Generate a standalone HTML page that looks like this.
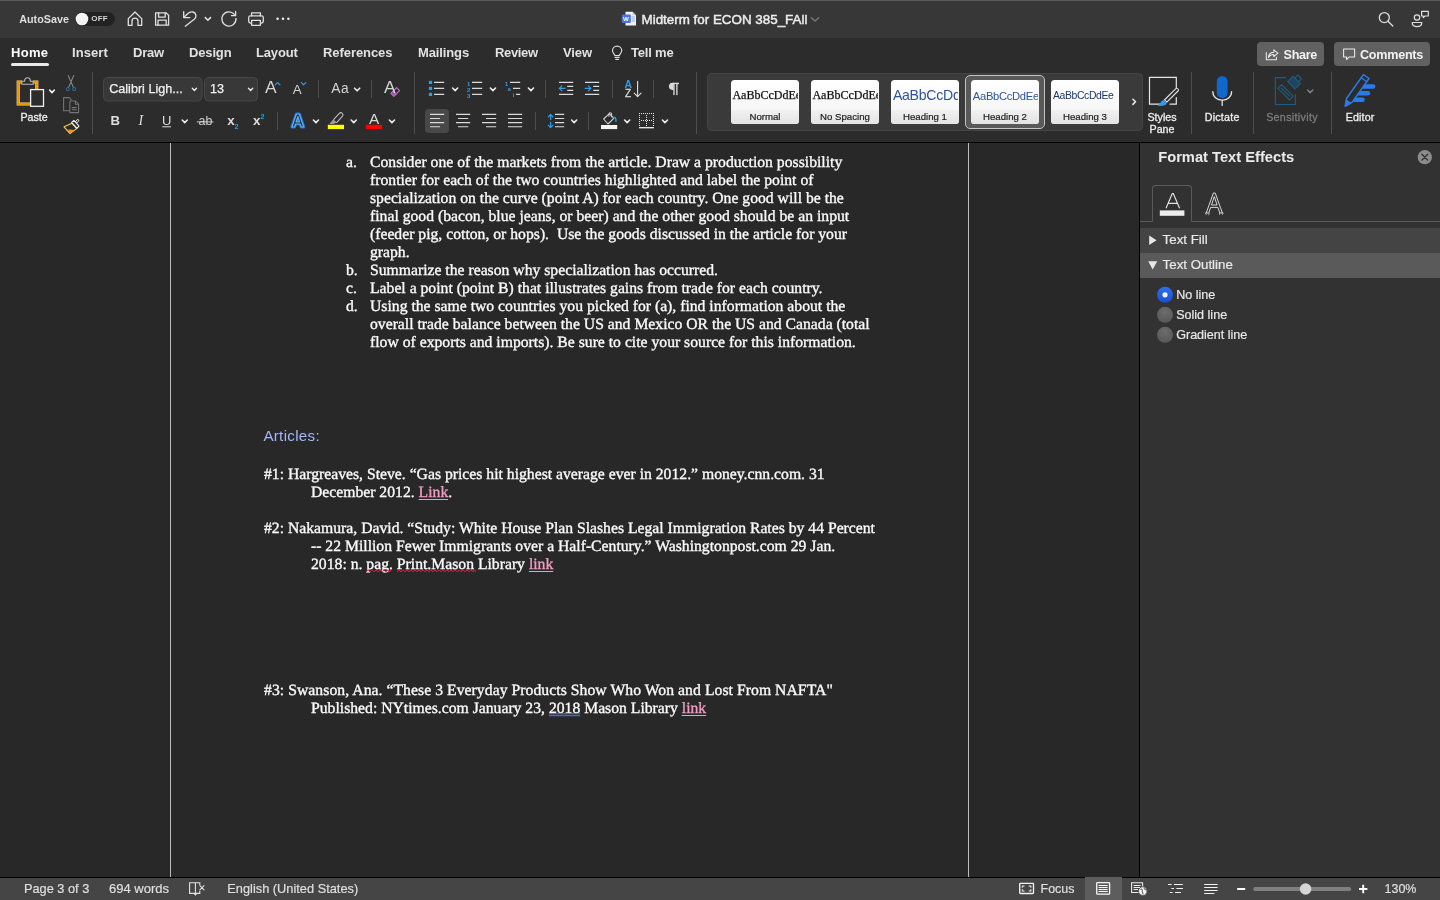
<!DOCTYPE html>
<html lang="en">
<head>
<meta charset="utf-8">
<title>Midterm for ECON 385_FAll</title>
<style>
*{box-sizing:border-box;margin:0;padding:0}
html,body{width:1440px;height:900px;overflow:hidden;background:#282828}
body{position:relative;font-family:"Liberation Sans",sans-serif;color:#e6e6e6;font-size:13px}
.abs{position:absolute}
.t{position:absolute;white-space:nowrap;line-height:1}
#titlebar{left:0;top:0;width:1440px;height:38px;background:#373737;border-top:1px solid #5c5c5c}
#ribbon{left:0;top:38px;width:1440px;height:104px;background:#2c2c2c}
#rline{left:0;top:142px;width:1440px;height:1px;background:#000}
#doc{left:0;top:143px;width:1139px;height:734px;background:#282828}
.pb{position:absolute;top:143px;width:1px;height:734px;background:#bdbdbd}
#pane{left:1139px;top:143px;width:301px;height:734px;background:#323232;border-left:1px solid #000}
#status{left:0;top:877px;width:1440px;height:23px;background:#454545;border-top:1px solid #000}
.tab{position:absolute;top:45px;font-weight:bold;font-size:13px;line-height:15px;color:#e2e2e2;white-space:nowrap}
.dl{position:absolute;text-rendering:geometricPrecision;white-space:nowrap;font-family:"Liberation Serif",serif;font-size:15.705px;line-height:18px;color:#fbfbfb;height:18px;-webkit-text-stroke:0.35px #fbfbfb}
.lk{color:#ee9cc2;-webkit-text-stroke:.35px #ee9cc2}
.st{position:absolute;top:881px;font-size:13px;line-height:15px;color:#e0e0e0;white-space:nowrap;-webkit-text-stroke:.15px #e0e0e0}
.pl{font-size:13px;color:#e8e8e8;-webkit-text-stroke:.2px #e8e8e8}
.num{position:absolute;white-space:nowrap;line-height:1;font-weight:bold;color:#2d9de6;font-size:6px}
.tile{position:absolute;top:80px;width:67px;height:30px;overflow:hidden;white-space:nowrap}
.tlab{position:absolute;top:110.9px;width:68px;text-align:center;font-size:9.65px;line-height:11px;color:#1c1c1c;white-space:nowrap;-webkit-text-stroke:.2px #1c1c1c}
.rlab{position:absolute;white-space:nowrap;font-size:10.7px;line-height:12px;color:#efefef;-webkit-text-stroke:.3px #efefef;text-align:center}
</style>
</head>
<body>
<div id="titlebar" class="abs"></div>
<div id="ribbon" class="abs"></div>
<div id="rline" class="abs"></div>
<div id="doc" class="abs"></div>
<div class="pb" style="left:170px"></div>
<div class="pb" style="left:968px"></div>
<div id="pane" class="abs"></div>
<div id="status" class="abs"></div>
<div id="ui" style="position:absolute;left:0;top:0;width:1440px;height:900px;will-change:transform">

<!-- TITLEBAR -->
<div class="t" id="autosave" style="left:19.2px;top:13.6px;font-size:10.8px;font-weight:bold;color:#dedede">AutoSave</div>
<div class="t" id="doctitle" style="left:641.5px;top:13px;font-size:13.4px;color:#ededed;-webkit-text-stroke:.45px #ededed">Midterm for ECON 385_FAll</div>

<!-- TABS -->
<div class="tab" style="left:11px;color:#fff;letter-spacing:0.3px">Home</div>
<div class="abs" style="left:11px;top:63px;width:38px;height:3px;border-radius:2px;background:#e9e9e9"></div>
<div class="tab" style="left:72px;letter-spacing:0.07px">Insert</div>
<div class="tab" style="left:133px;letter-spacing:-0.2px">Draw</div>
<div class="tab" style="left:189px;letter-spacing:-0.15px">Design</div>
<div class="tab" style="left:256px;letter-spacing:-0.15px">Layout</div>
<div class="tab" style="left:323px;letter-spacing:-0.07px">References</div>
<div class="tab" style="left:418px;letter-spacing:-0.12px">Mailings</div>
<div class="tab" style="left:495px;letter-spacing:-0.36px">Review</div>
<div class="tab" style="left:563px;letter-spacing:-0.1px">View</div>
<div class="tab" style="left:631px;letter-spacing:-0.2px">Tell me</div>

<!-- RIBBON -->
<svg class="abs" style="left:0;top:0" width="1440" height="143" viewBox="0 0 1440 143" fill="none" stroke-linecap="round" stroke-linejoin="round">
<defs>
<path id="chv" d="M0 0 L2.55 2.6 L5.1 0" stroke="#ececec" stroke-width="1.6" fill="none"/>
<path id="chs" d="M0 0 L2.6 2.6 L5.2 0" stroke="#e4e4e4" stroke-width="1.5" fill="none"/>
<path id="chx" d="M0 0 L2.1 2.2 L4.2 0" stroke="#e8e8e8" stroke-width="1.4" fill="none"/>
<linearGradient id="tg" x1="0" y1="0" x2="0" y2="1"><stop offset="0" stop-color="#ffffff"/><stop offset="1" stop-color="#f3f3f3"/></linearGradient>
<linearGradient id="lg" x1="0" y1="0" x2="0" y2="1"><stop offset="0" stop-color="#f1f1f1"/><stop offset="1" stop-color="#e2e2e2"/></linearGradient>
</defs>
<!-- autosave toggle -->
<rect x="75.5" y="12" width="39.5" height="14" rx="7" fill="#222222"/>
<circle cx="82" cy="19" r="6.3" fill="#f4f4f4"/>
<!-- titlebar icons -->
<g stroke="#e0e0e0" stroke-width="1.3">
<path d="M128.3 18.6 L135 12 L141.7 18.6 V25.4 H138 V21.2 A3 3 0 0 0 132 21.2 V25.4 H128.3 Z"/>
<path d="M155.6 12.9 H166.2 L168.6 15.3 V25.2 H155.6 Z"/>
<path d="M158.6 13 V17.2 H165.2 V13"/>
<path d="M158 25.1 V20.2 H166.2 V25.1"/>
<path d="M185.3 26.2 L194.2 19.3 C197 17 196.4 12.9 193 12 C190.8 11.4 189 12.4 187.4 14 L184 17.3"/>
<path d="M183.7 11.6 V17.6 H189.8"/>
<path d="M234.3 14.3 A7.1 7.1 0 1 0 236 18.5"/>
<path d="M235.6 11.4 V15.6 H231.4"/>
<path d="M251.6 15.8 V12.9 H260.4 V15.8"/>
<rect x="248.7" y="15.9" width="14.6" height="7.2" rx="1.8"/>
<rect x="251.6" y="20.4" width="8.8" height="4.9" fill="#373737"/>
</g>
<use href="#chs" x="205.3" y="17.6"/>
<g fill="#ececec"><circle cx="277.6" cy="18.8" r="1.3"/><circle cx="283" cy="18.8" r="1.3"/><circle cx="288.4" cy="18.8" r="1.3"/></g>
<!-- doc icon -->
<path d="M625.5 11.8 H632.5 L636 15.3 V25.6 H625.5 Z" fill="#f2f2f2" stroke="none"/>
<path d="M632.5 11.8 L636 15.3 H632.5 Z" fill="#c9c9c9" stroke="none"/>
<rect x="621.8" y="14.6" width="9" height="8.4" rx="1" fill="#4a74d8" stroke="none"/>
<g stroke="#7f9fe6" stroke-width="0.9"><path d="M632 17 H634.5 M632 19 H634.5 M632 21 H634.5"/></g>
<path d="M811.3 17.8 L815 21 L818.7 17.8" stroke="#7c7c7c" stroke-width="1.3"/>
<!-- search -->
<g stroke="#dedede" stroke-width="1.3"><circle cx="1384.3" cy="17.6" r="5"/><path d="M1388 21.3 L1392.8 26"/></g>
<!-- people/feedback -->
<g stroke="#dedede" stroke-width="1.2"><circle cx="1417" cy="17.5" r="2.7"/><path d="M1412.2 22.5 H1421.8 C1421.8 25 1419.8 26.6 1417 26.6 C1414.2 26.6 1412.2 25 1412.2 22.5 Z"/><path d="M1421.6 11.3 H1428.3 V16 H1425 L1423.3 17.7 V16 H1421.6 Z"/></g>
<!-- bulb -->
<g stroke="#dcdcdc" stroke-width="1.15"><path d="M614.8 55.6 C614.8 53.9 612.5 53.1 612.5 50.7 A4.6 4.6 0 0 1 621.7 50.7 C621.7 53.1 619.4 53.9 619.4 55.6 Z"/><path d="M615 57.5 H619.2 M615.7 59.3 H618.5"/></g>
<!-- share / comments buttons -->
<rect x="1257" y="42" width="67" height="24" rx="4" fill="#616161"/>
<rect x="1334" y="42" width="96" height="24" rx="4" fill="#616161"/>
<g stroke="#ececec" stroke-width="1.05"><path d="M1266.3 52.4 V59.8 H1276.4 V57.2"/><path d="M1268.4 57.6 C1268.7 54.4 1270.8 52.4 1273.8 52.3 V49.8 L1277.9 53.2 L1273.8 56.6 V54.4 C1271.4 54.4 1269.6 55.4 1268.4 57.6 Z"/>
<path d="M1343.6 49 H1354.6 V57 H1349 L1346.6 59.6 V57 H1343.6 Z"/></g>
<!-- group separators -->
<g stroke="#4e4e4e" stroke-width="1" stroke-linecap="butt"><path d="M92.5 72 V134 M414.5 72 V134 M696.5 72 V134 M1191.5 72 V134 M1253.5 72 V134 M1331.5 72 V134"/>
<path d="M318.5 80 V98 M371.5 80 V98 M277.5 112 V130 M545.5 80 V98 M612.5 80 V98 M653.5 80 V98 M535.5 112 V130 M588.5 112 V130"/></g>
<!-- paste -->
<path d="M22 82 H18.2 V104 H30" stroke="#ffdc80" stroke-width="3.1" stroke-linecap="butt" stroke-linejoin="miter"/><path d="M33 82 H36.8 V89" stroke="#ffdc80" stroke-width="3.1" stroke-linecap="butt" stroke-linejoin="miter"/>
<path d="M22 82 H18.2 V104 H30" stroke="#f29400" stroke-width="2.2" stroke-linecap="butt" stroke-linejoin="miter"/>
<path d="M33 82 H36.8 V89" stroke="#f29400" stroke-width="2.2" stroke-linecap="butt" stroke-linejoin="miter"/>
<path d="M21.8 84.3 V81.3 H24.6 C24.6 76.6 30.4 76.6 30.4 81.3 H33.2 V84.3 Z" stroke="#b9b9b9" stroke-width="1.1" fill="#2c2c2c"/>
<rect x="30.6" y="89.6" width="12.9" height="16.7" stroke="#f0f0f0" stroke-width="1.3" fill="#2c2c2c" stroke-linejoin="miter"/>
<path d="M49.7 90.1 L52 92.6 L54.3 90.1" stroke="#ececec" stroke-width="1.6"/>
<!-- scissors -->
<g stroke="#8a8a8a" stroke-width="1.1"><path d="M68.3 75.6 L73.5 87.6 M73.7 75.6 L68.5 87.6"/></g>
<g stroke="#296d98" stroke-width="1.05"><circle cx="67.8" cy="89.1" r="1.55"/><circle cx="74.2" cy="89.1" r="1.55"/></g>
<!-- copy -->
<g stroke="#757575" stroke-width="1.05"><path d="M69.6 110.7 H63.6 V97.6 H69.2 L71.3 99.7"/><path d="M69.9 101 H75.6 L78.6 104 V112.6 H69.9 Z"/><path d="M75.4 101.2 V104.2 H78.4"/><path d="M72.3 107.6 H76.3 M72.3 109.8 H76.3"/></g>
<!-- format painter -->
<path d="M64 126.8 L72 123.3 L76.6 128.6 L70 133.6 Z" stroke="#f6cd52" stroke-width="1.1" fill="none"/>
<path d="M67.8 129.6 L74.6 130 L70 133.4 Z" fill="#f29a17" stroke="none"/>
<path d="M71.6 122.4 L73.9 120.4 L79 126.2 L77 128.4 Z" stroke="#efefef" stroke-width="1.05" fill="#2c2c2c"/>
<path d="M75.6 121.6 L77.6 119.3 L79 120.4 L77 122.9 Z" stroke="#efefef" stroke-width="1" fill="#2c2c2c"/>
<!-- font boxes -->
<rect x="103.5" y="77.5" width="98.5" height="23.5" rx="4" fill="#383838" stroke="#474747" stroke-width="1"/>
<rect x="204.5" y="77.5" width="53" height="23.5" rx="4" fill="#383838" stroke="#474747" stroke-width="1"/>
<use href="#chx" x="192.3" y="88.2"/>
<use href="#chx" x="248.5" y="88.2"/>
<!-- grow/shrink carets -->
<path d="M275.3 84.8 L277.6 82.6 L279.9 84.8" stroke="#2d9de6" stroke-width="1.2"/>
<path d="M301.3 82.6 L303.6 84.8 L305.9 82.6" stroke="#2d9de6" stroke-width="1.2"/>
<use href="#chv" x="354.6" y="88.2"/>
<!-- eraser -->
<path d="M390.9 93.4 L396.6 87.6 L399.6 90.6 L393.9 96.4 Z" stroke="#d66bd1" stroke-width="1.1" fill="#2c2c2c"/>
<path d="M393 91.4 L395.9 94.3" stroke="#d66bd1" stroke-width="1.1"/>
<path d="M391.7 93.5 L393.2 92 L395.3 94.1 L393.8 95.6 Z" fill="#c04cc0" stroke="none"/>
<!-- row2 chevrons -->
<use href="#chv" x="182.2" y="120.0"/>
<use href="#chv" x="313.4" y="120.0"/>
<use href="#chv" x="351.2" y="120.0"/>
<use href="#chv" x="389.4" y="120.0"/>
<g font-family="Liberation Sans, sans-serif" font-weight="bold" font-size="17.6" text-anchor="middle"><text x="297.9" y="126.8" stroke="#1c6cd6" stroke-width="3.2" fill="none">A</text><text x="297.9" y="126.8" stroke="#5cb2f6" stroke-width="1.2" fill="#2c2c2c">A</text></g>
<!-- highlighter -->
<rect x="327.8" y="124.8" width="16.2" height="4.3" fill="#ffff00" stroke="none"/>
<rect x="332.6" y="115.4" width="11.4" height="4.3" rx="1.9" transform="rotate(-47 338.3 117.5)" stroke="#c2c2c2" stroke-width="1.05"/>
<path d="M333.2 119.2 L336.6 122.4 L333.4 123.9 L329.4 123.9 Z" fill="#9c9c9c" stroke="none"/>
<!-- font color bar -->
<rect x="365.8" y="124.8" width="16.2" height="4.3" fill="#ff0000" stroke="none"/>
<!-- underline for U and strike for ab -->
<path d="M162.3 126.8 H171" stroke="#dcdcdc" stroke-width="1" stroke-linecap="butt"/>
<path d="M196.8 121.9 H213.4" stroke="#cfcfcf" stroke-width="1" stroke-linecap="butt"/>

<!-- bullets -->
<g fill="#2d9de6" stroke="none"><rect x="428.9" y="80.8" width="3.2" height="3.2"/><rect x="428.9" y="86.8" width="3.2" height="3.2"/><rect x="428.9" y="92.8" width="3.2" height="3.2"/></g>
<g stroke="#dadada" stroke-width="1.15" stroke-linecap="butt"><path d="M434 82.4 H444.2 M434 88.4 H444.2 M434 94.4 H444.2"/>
<path d="M472 82.4 H482.2 M472 88.4 H482.2 M472 94.4 H482.2"/>
<path d="M510 82.4 H520.2 M513 88.4 H520.2 M516 94.4 H520.2"/></g>
<use href="#chv" x="452.6" y="88.0"/><use href="#chv" x="490.4" y="88.0"/><use href="#chv" x="528.4" y="88.0"/>
<!-- align left selected bg -->
<rect x="425" y="109" width="24" height="24" rx="3.5" fill="#484848" stroke="none"/>
<g stroke="#dadada" stroke-width="1.15" stroke-linecap="butt">
<path d="M430 114.4 H444.2 M430 118.5 H440 M430 122.6 H444.2 M430 126.7 H440"/>
<path d="M456 114.4 H470.2 M458 118.5 H468.2 M456 122.6 H470.2 M458 126.7 H468.2"/>
<path d="M482 114.4 H496.2 M486 118.5 H496.2 M482 122.6 H496.2 M486 126.7 H496.2"/>
<path d="M508 114.4 H522.2 M508 118.5 H522.2 M508 122.6 H522.2 M508 126.7 H522.2"/>
<path d="M555 114.4 H564.2 M555 118.5 H564.2 M555 122.6 H564.2 M555 126.7 H564.2"/>
<!-- indent -->
<path d="M559 82.4 H573.2 M567.2 86.4 H573.2 M567.2 90.4 H573.2 M559 94.4 H573.2"/>
<path d="M585 82.4 H599.2 M593.2 86.4 H599.2 M593.2 90.4 H599.2 M585 94.4 H599.2"/>
</g>
<g stroke="#2d9de6" stroke-width="1.25"><path d="M559.4 88.4 H565 M561.8 85.9 L559.3 88.4 L561.8 90.9"/><path d="M585.2 88.4 H590.8 M588.4 85.9 L590.9 88.4 L588.4 90.9"/>
<path d="M550.6 114.6 V119.6 M548.4 116.8 L550.6 114.5 L552.8 116.8 M550.6 122.4 V127.6 M548.4 125.3 L550.6 127.7 L552.8 125.3"/></g>
<use href="#chv" x="571.6" y="120.0"/><use href="#chv" x="624.6" y="120.0"/><use href="#chv" x="662.4" y="120.0"/>
<!-- sort arrow -->
<g stroke="#dadada" stroke-width="1.15"><path d="M637.6 81.2 V96.4 M634.2 93.2 L637.6 96.6 L641 93.2"/></g>
<g fill="#dcdcdc" stroke="none"><path d="M673.6 82.8 H672.5 A3.55 3.55 0 0 0 672.5 89.9 H673.6 Z"/><rect x="673.3" y="82.8" width="1.35" height="12.3"/><rect x="676.2" y="82.8" width="1.35" height="12.3"/><rect x="672.5" y="82.8" width="6.5" height="1.3"/></g>
<!-- shading -->
<rect x="601" y="125" width="16.2" height="4.1" fill="#f4f4f4" stroke="none"/>
<g stroke="#d4d4d4" stroke-width="1.05"><path d="M603.6 119 L609.4 113.6 L613.8 118.4 L608 124 Z"/><path d="M609 116.2 V113.9 C609 112.4 611.6 112.4 611.6 113.9 V116.8"/></g>
<path d="M613.2 117.6 C615 116.6 616.4 118.4 615.9 121.4" stroke="#3a9be0" stroke-width="1.4"/>
<!-- borders -->
<g stroke="#e6e6e6" stroke-width="1" stroke-dasharray="1 1" stroke-linecap="butt" shape-rendering="crispEdges"><path d="M639 113.5 H654 M639.5 115 V127 M653.5 115 V127 M646.5 115 V127 M641 120.5 H653"/></g>
<path d="M639 127.7 H654" stroke="#f0f0f0" stroke-width="1.3" stroke-linecap="butt"/>
<!-- gallery -->
<rect x="707.5" y="73.5" width="435" height="57" rx="4" fill="#3a3a3a" stroke="#454545" stroke-width="1"/>
<rect x="965.5" y="75.5" width="79" height="53" rx="4.5" fill="#595959" stroke="#c4c4c4" stroke-width="1"/>
<g stroke="none">
<rect x="731" y="80" width="68" height="44" rx="3.5" fill="url(#tg)"/><path d="M731 110 H799 V120.5 A3.5 3.5 0 0 1 795.5 124 H734.5 A3.5 3.5 0 0 1 731 120.5 Z" fill="url(#lg)"/>
<rect x="811" y="80" width="68" height="44" rx="3.5" fill="url(#tg)"/><path d="M811 110 H879 V120.5 A3.5 3.5 0 0 1 875.5 124 H814.5 A3.5 3.5 0 0 1 811 120.5 Z" fill="url(#lg)"/>
<rect x="891" y="80" width="68" height="44" rx="3.5" fill="url(#tg)"/><path d="M891 110 H959 V120.5 A3.5 3.5 0 0 1 955.5 124 H894.5 A3.5 3.5 0 0 1 891 120.5 Z" fill="url(#lg)"/>
<rect x="971" y="80" width="68" height="44" rx="3.5" fill="url(#tg)"/><path d="M971 110 H1039 V120.5 A3.5 3.5 0 0 1 1035.5 124 H974.5 A3.5 3.5 0 0 1 971 120.5 Z" fill="url(#lg)"/>
<rect x="1051" y="80" width="68" height="44" rx="3.5" fill="url(#tg)"/><path d="M1051 110 H1119 V120.5 A3.5 3.5 0 0 1 1115.5 124 H1054.5 A3.5 3.5 0 0 1 1051 120.5 Z" fill="url(#lg)"/>
</g>
<path d="M1132.9 99.2 L1135.5 101.8 L1132.9 104.4" stroke="#ececec" stroke-width="1.5"/>
<!-- styles pane -->
<path d="M1165 104.2 H1149.5 V77.3 H1176.3 V88 M1176.3 97.5 V104.2 H1170" stroke="#e6e6e6" stroke-width="1.2" stroke-linejoin="miter"/>
<path d="M1177.6 88.6 C1178.6 89.2 1178.7 90.2 1178 91 L1166.8 102.2 L1164.4 100 L1175.6 88.8 C1176.2 88.2 1177 88.2 1177.6 88.6 Z" stroke="#e6e6e6" stroke-width="1.1" fill="#2c2c2c"/>
<path d="M1164.2 99.8 L1167 102.4 C1166.4 105.2 1162.4 106.8 1157.4 105.6 C1160.4 104.6 1160.6 100.4 1164.2 99.8 Z" fill="#3a96e8" stroke="none"/>
<!-- dictate -->
<rect x="1216.8" y="76" width="10.8" height="22" rx="5.4" fill="#1067cc" stroke="none"/>
<path d="M1212.8 91.5 C1212.8 103 1231.6 103 1231.6 91.5 M1222.2 100.4 V105.4" stroke="#e6e6e6" stroke-width="1.25"/>
<!-- sensitivity -->
<g stroke="#1f5c80" stroke-width="1.15" stroke-linejoin="miter"><path d="M1285.5 77.6 H1275.4 V104.5 H1295.4 V94.5"/>
<g transform="rotate(45 1285.6 92.2)"><rect x="1277.4" y="89.6" width="16.4" height="5.2" fill="#2c2c2c"/><path d="M1280 92.2 H1291.2"/></g>
<g transform="rotate(45 1294 82.6)"><rect x="1288.8" y="78.8" width="10.4" height="7.6" fill="#1d4560"/><rect x="1291.4" y="74.4" width="5.2" height="4.4" fill="#2c2c2c"/></g></g>
<path d="M1307.6 90 L1310.2 92.6 L1312.8 90" stroke="#808080" stroke-width="1.5"/>
<!-- editor -->
<g fill="#2a7be4" stroke="none"><rect x="1359.6" y="84.2" width="15.8" height="4.5" rx="2.25"/><rect x="1356" y="90.9" width="14.2" height="4.5" rx="2.25"/><rect x="1352" y="97.6" width="12.8" height="4.5" rx="2.25"/></g>
<path d="M1345.2 106.2 L1346.5 98.5 L1363.4 74.6 L1369 78.5 L1352 102.4 Z" fill="#2c2c2c" stroke="#2a7be4" stroke-width="1.5" stroke-linejoin="round"/>
<path d="M1345.2 106.2 L1346.3 99.8 L1350.8 103 Z" fill="#2a7be4" stroke="#2a7be4" stroke-width="1"/>
<path d="M1361.2 77.8 L1366.8 81.7" stroke="#2a7be4" stroke-width="1.3"/>
<!--SVG-MORE-->
</svg>
<div class="t" style="left:622.9px;top:15.9px;font-size:6.2px;font-weight:bold;color:#fff">W</div>
<div class="t" style="left:91.3px;top:14.6px;font-size:8px;font-weight:bold;color:#d6d6d6;letter-spacing:.15px">OFF</div>
<div class="t" style="left:1283.6px;top:49.1px;font-size:12.6px;font-weight:bold;color:#f2f2f2;letter-spacing:-.35px">Share</div>
<div class="t" style="left:1360px;top:49.1px;font-size:12.6px;font-weight:bold;color:#f2f2f2;letter-spacing:-.26px">Comments</div>

<div class="t rl" style="left:20.4px;top:111.6px;font-size:10.7px;color:#efefef;-webkit-text-stroke:.3px #efefef">Paste</div>
<div class="t" style="left:109.2px;top:82.6px;font-size:12.6px;color:#f0f0f0;-webkit-text-stroke:.25px #f0f0f0">Calibri Ligh...</div>
<div class="t" style="left:210px;top:82.6px;font-size:12.6px;color:#f0f0f0;-webkit-text-stroke:.25px #f0f0f0">13</div>
<div class="t" style="left:264.9px;top:79.1px;font-size:17.4px;color:#d4d4d4;letter-spacing:-1px">A</div>
<div class="t" style="left:292.7px;top:82.5px;font-size:13.3px;color:#d4d4d4">A</div>
<div class="t" style="left:331.3px;top:82.1px;font-size:13.8px;color:#d4d4d4;letter-spacing:.5px">Aa</div>
<div class="t" style="left:383.9px;top:79.1px;font-size:17.4px;color:#d4d4d4">A</div>
<div class="t" style="left:110.6px;top:113.5px;font-size:13.2px;font-weight:bold;color:#dedede">B</div>
<div class="t" style="left:138.6px;top:114.1px;font-size:14px;font-style:italic;font-family:'Liberation Serif',serif;color:#dedede">I</div>
<div class="t" style="left:161.9px;top:113.5px;font-size:13px;color:#dedede">U</div>
<div class="t" style="left:198.6px;top:114.8px;font-size:12.4px;color:#cfcfcf">ab</div>
<div class="t" style="left:227.3px;top:113.6px;font-size:13.4px;font-weight:bold;color:#dedede">x</div>
<div class="t" style="left:234.6px;top:123.2px;font-size:7px;font-weight:bold;color:#2d9de6">2</div>
<div class="t" style="left:253.1px;top:113.6px;font-size:13.4px;font-weight:bold;color:#dedede">x</div>
<div class="t" style="left:260.4px;top:112.6px;font-size:7px;font-weight:bold;color:#2d9de6">2</div>
<div class="t" style="left:369px;top:111.4px;font-size:15.4px;color:#d8d8d8">A</div>

<div class="num" style="left:466.9px;top:80.6px">1</div><div class="num" style="left:466.9px;top:86.6px">2</div><div class="num" style="left:466.9px;top:92.6px">3</div>
<div class="num" style="left:504.8px;top:80.6px">1</div><div class="num" style="left:507.6px;top:86px">a</div><div class="num" style="left:512.8px;top:92.2px">i</div>
<div class="t" style="left:624.6px;top:79.5px;font-size:10.4px;font-weight:bold;color:#2d9de6">A</div>
<div class="t" style="left:625px;top:89px;font-size:10px;color:#dadada;-webkit-text-stroke:.3px #dadada">Z</div>
<div class="tile" style="left:731px"><span style="position:absolute;left:1.4px;top:8.4px;font:12px/14px 'Liberation Serif',serif;color:#111;-webkit-text-stroke:.25px #111">AaBbCcDdEe</span></div>
<div class="tile" style="left:811px"><span style="position:absolute;left:1.4px;top:8.4px;font:12px/14px 'Liberation Serif',serif;color:#111;-webkit-text-stroke:.25px #111">AaBbCcDdEe</span></div>
<div class="tile" style="left:891px"><span style="position:absolute;left:1.9px;top:6.6px;font:14.1px/17px 'Liberation Sans',sans-serif;color:#2f5496;letter-spacing:-.27px">AaBbCcDdEe</span></div>
<div class="tile" style="left:971px"><span style="position:absolute;left:1.8px;top:8.6px;font:11.2px/14px 'Liberation Sans',sans-serif;color:#2f5496;letter-spacing:-.3px">AaBbCcDdEe</span></div>
<div class="tile" style="left:1051px"><span style="position:absolute;left:2px;top:9px;font:10.4px/14px 'Liberation Sans',sans-serif;color:#1f3763;letter-spacing:-.36px">AaBbCcDdEe</span></div>
<div class="tlab" style="left:731px">Normal</div>
<div class="tlab" style="left:811px">No Spacing</div>
<div class="tlab" style="left:891px">Heading 1</div>
<div class="tlab" style="left:971px">Heading 2</div>
<div class="tlab" style="left:1051px">Heading 3</div>
<div class="rlab" style="left:1137px;width:50px;top:111.4px">Styles<br>Pane</div>
<div class="rlab" style="left:1197.2px;width:50px;top:111.4px;letter-spacing:.25px">Dictate</div>
<div class="rlab" style="left:1262px;width:60px;top:111.4px;color:#7c7c7c;-webkit-text-stroke:.3px #7c7c7c;letter-spacing:.33px">Sensitivity</div>
<div class="rlab" style="left:1335.1px;width:50px;top:111.4px;letter-spacing:.15px">Editor</div>

<!--RIBBON-CONTENT-->

<!-- DOCUMENT -->
<div id="doctext" style="position:absolute;left:0;top:1px;width:1139px;height:876px">
<div class="dl" style="left:346px;top:153px">a.</div>
<div class="dl" style="left:370px;top:153px">Consider one of the markets from the article. Draw a production possibility</div>
<div class="dl" style="left:370px;top:171px">frontier for each of the two countries highlighted and label the point of</div>
<div class="dl" style="left:370px;top:189px">specialization on the curve (point A) for each country. One good will be the</div>
<div class="dl" style="left:370px;top:207px">final good (bacon, blue jeans, or beer) and the other good should be an input</div>
<div class="dl" style="left:370px;top:225px">(feeder pig, cotton, or hops).&nbsp; Use the goods discussed in the article for your</div>
<div class="dl" style="left:370px;top:243px">graph.</div>
<div class="dl" style="left:346px;top:261px">b.</div>
<div class="dl" style="left:370px;top:261px">Summarize the reason why specialization has occurred.</div>
<div class="dl" style="left:346px;top:279px">c.</div>
<div class="dl" style="left:370px;top:279px">Label a point (point B) that illustrates gains from trade for each country.</div>
<div class="dl" style="left:346px;top:297px">d.</div>
<div class="dl" style="left:370px;top:297px">Using the same two countries you picked for (a), find information about the</div>
<div class="dl" style="left:370px;top:315px">overall trade balance between the US and Mexico OR the US and Canada (total</div>
<div class="dl" style="left:370px;top:333px">flow of exports and imports). Be sure to cite your source for this information.</div>

<div class="t" id="articles" style="left:263.4px;top:427.4px;font-size:15.1px;letter-spacing:.32px;color:#a4b7fc">Articles:</div>

<div class="dl" style="left:264px;top:465px">#1: Hargreaves, Steve. “Gas prices hit highest average ever in 2012.” money.cnn.com. 31</div>
<div class="dl" style="left:311px;top:483px">December 2012. <span class="lk">Link</span>.</div>
<div class="dl" style="left:264px;top:519px">#2: Nakamura, David. “Study: White House Plan Slashes Legal Immigration Rates by 44 Percent</div>
<div class="dl" style="left:311px;top:537px">-- 22 Million Fewer Immigrants over a Half-Century.” Washingtonpost.com 29 Jan.</div>
<div class="dl" style="left:311px;top:555px">2018: n. <span class="sq">pag</span>. <span class="sq">Print.Mason</span> Library <span class="lk">link</span></div>
<div class="dl" style="left:264px;top:681px;letter-spacing:.05px">#3: Swanson, Ana. “These 3 Everyday Products Show Who Won and Lost From NAFTA"</div>
<div class="dl" style="left:311px;top:699px">Published: NYtimes.com January 23, <span class="gr">2018</span> Mason Library <span class="lk">link</span></div>
</div>

<svg class="abs" style="left:0;top:143px" width="1139" height="734" viewBox="0 143 1139 734" fill="none">
<path d="M366.0 571.7 L368.0 569.9 L370.0 571.7 L372.0 569.9 L374.0 571.7 L376.0 569.9 L378.0 571.7 L380.0 569.9 L382.0 571.7 L384.0 569.9 L386.0 571.7 L388.0 569.9 L390.0 571.7 L390.5 569.9" stroke="#e0243f" stroke-width="1"/>
<path d="M397.0 571.7 L399.0 569.9 L401.0 571.7 L403.0 569.9 L405.0 571.7 L407.0 569.9 L409.0 571.7 L411.0 569.9 L413.0 571.7 L415.0 569.9 L417.0 571.7 L419.0 569.9 L421.0 571.7 L423.0 569.9 L425.0 571.7 L427.0 569.9 L429.0 571.7 L431.0 569.9 L433.0 571.7 L435.0 569.9 L437.0 571.7 L439.0 569.9 L441.0 571.7 L443.0 569.9 L445.0 571.7 L447.0 569.9 L449.0 571.7 L451.0 569.9 L453.0 571.7 L455.0 569.9 L457.0 571.7 L459.0 569.9 L461.0 571.7 L463.0 569.9 L465.0 571.7 L467.0 569.9 L469.0 571.7 L471.0 569.9 L473.0 571.7 L475.0 569.9 L475.5 571.7" stroke="#e0243f" stroke-width="1"/>
<path d="M548.8 713.8 H580.2 M548.8 715.7 H580.2" stroke="#5273fa" stroke-width="1"/>
<path d="M418.6 499.5 H448 M528.9 571.5 H553.2 M681.6 715.5 H706.2" stroke="#ee9cc2" stroke-width="1"/>
</svg>
<!-- PANE -->
<div class="t" style="left:1158.2px;top:149.6px;font-size:14.7px;font-weight:bold;color:#ececec">Format Text Effects</div>
<div class="abs" style="left:1140px;top:221px;width:300px;height:1px;background:#5b5b5b"></div>
<div class="abs" style="left:1152px;top:185px;width:40px;height:37px;background:#323232;border:1px solid #5b5b5b;border-bottom:none;border-radius:3.5px 3.5px 0 0"></div>
<div class="abs" style="left:1140px;top:228px;width:300px;height:24.5px;background:#444444"></div>
<div class="abs" style="left:1140px;top:253px;width:300px;height:24.5px;background:#5a5a5a"></div>
<svg class="abs" style="left:1140px;top:143px" width="300" height="220" viewBox="1140 143 300 220" fill="none">
<defs><radialGradient id="rg" cx="0.5" cy="0.3" r="0.8"><stop offset="0" stop-color="#6c6c6c"/><stop offset="1" stop-color="#565656"/></radialGradient>
<linearGradient id="bg1" x1="0" y1="0" x2="0" y2="1"><stop offset="0" stop-color="#2f6ff0"/><stop offset="1" stop-color="#1a4fd0"/></linearGradient></defs>
<circle cx="1424.8" cy="157.2" r="7.1" fill="#8c8c8c"/>
<path d="M1421.9 154.3 L1427.7 160.1 M1427.7 154.3 L1421.9 160.1" stroke="#2e2e2e" stroke-width="1.3" stroke-linecap="round"/>
<rect x="1159.8" y="210.4" width="24.6" height="5.4" fill="#ededed"/>
<path d="M1166 208.3 L1172.3 193.6 H1173.3 L1179.6 208.3 M1168.3 203.4 H1177.3" stroke="#e4e4e4" stroke-width="1.15"/>
<g stroke="#e2e2e2" stroke-width="0.95"><path d="M1206.2 213 L1213.4 193 H1215.2 L1222.4 213 H1219.8 L1217.9 207.4 H1210.6 L1208.7 213 Z"/><path d="M1211.5 205 L1214.3 196.6 L1217.1 205 Z"/><path d="M1206 212.4 C1205.4 213.4 1205.6 214.2 1206.4 214.6 M1222.6 212.4 C1223.2 213.4 1223 214.2 1222.2 214.6 M1209 213.2 C1209.4 214 1209.2 214.4 1208.6 214.8 M1219.6 213.2 C1219.2 214 1219.4 214.4 1220 214.8"/></g>
<path d="M1149.2 235.6 L1156.6 240.3 L1149.2 245 Z" fill="#e6e6e6"/>
<path d="M1148.2 261.2 H1157.2 L1152.7 269.4 Z" fill="#e6e6e6"/>
<circle cx="1165" cy="294.8" r="8" fill="url(#bg1)"/><circle cx="1165" cy="294.8" r="2.6" fill="#f4f4f4"/>
<circle cx="1165" cy="314.8" r="8" fill="url(#rg)"/>
<circle cx="1165" cy="334.8" r="8" fill="url(#rg)"/>
</svg>
<div class="t pl" style="left:1162.6px;top:232.5px;font-size:13.3px">Text Fill</div>
<div class="t pl" style="left:1162.6px;top:257.8px;font-size:13.3px">Text Outline</div>
<div class="t pl" style="left:1176.2px;top:288.6px;font-size:12.55px">No line</div>
<div class="t pl" style="left:1176.2px;top:308.6px;font-size:12.55px">Solid line</div>
<div class="t pl" style="left:1176.2px;top:328.6px;font-size:12.55px">Gradient line</div>


<!-- STATUS -->
<div class="st" style="left:24px;font-size:12.75px">Page 3 of 3</div>
<div class="st" style="left:109px">694 words</div>
<div class="st" style="left:227.3px;font-size:12.8px">English (United States)</div>
<div class="st" style="left:1040.6px;top:881.7px;font-size:12.45px">Focus</div>
<div class="st" style="left:1384.6px;top:881.7px;font-size:12.45px">130%</div>
<div class="abs" style="left:1085px;top:877px;width:37px;height:23px;background:#5d5d5d"></div>
<svg class="abs" style="left:0;top:878px" width="1440" height="22" viewBox="0 878 1440 22" fill="none" stroke-linecap="round" stroke-linejoin="round">
<g stroke="#e2e2e2" stroke-width="1.1" stroke-linejoin="miter"><path d="M195.4 882.8 V893.4 M195.4 882.8 H189.6 V893.4 H195.4 M195.4 882.8 H199.8 V884.4 M199.8 891.2 V893.4 H195.4 M194.2 893.6 L195.4 894.9 L196.6 893.6"/><path d="M199.9 885.6 L204 889.8 M204 885.6 L199.9 889.8"/></g>
<g stroke="#f2f2f2"><rect x="1019.7" y="883.3" width="13.8" height="10.2" rx="0.8" stroke-width="1.35"/><path d="M1022.3 887.3 V885.9 H1024.1 M1029.1 885.9 H1030.9 V887.3 M1030.9 889.5 V890.9 H1029.1 M1024.1 890.9 H1022.3 V889.5" stroke-width="1.05"/></g>
<g stroke="#f6f6f6"><rect x="1096.7" y="882.6" width="12.9" height="11.6" rx="0.8" stroke-width="1.3"/><path d="M1098.6 885.5 H1107.7 M1098.6 887.5 H1107.7 M1098.6 889.5 H1107.7 M1098.6 891.5 H1107.7" stroke-linecap="butt" stroke-width="1.05"/></g>
<g stroke="#ececec" stroke-width="1.1"><path d="M1138.6 892.5 H1131.6 V882.7 H1142.6 V886.4"/><path d="M1133.6 885.5 H1140.6 M1133.6 887.5 H1140.6 M1133.6 889.5 H1138" stroke-linecap="butt" stroke-width="1"/></g>
<circle cx="1142.8" cy="891.1" r="4.3" fill="#f4f4f4" stroke="#454545" stroke-width="0.8"/><path d="M1140.8 889.2 C1141.8 888.8 1142.8 889.6 1142.3 890.6 C1141.8 891.7 1143 892.2 1143 893.8 M1144.3 888 C1143.9 889.2 1144.9 889.9 1146 889.7" stroke="#454545" stroke-width="1"/>
<g stroke="#f2f2f2" stroke-width="1.2" stroke-linecap="butt"><path d="M1168 884.5 H1171.6 M1174 884.5 H1182.8 M1171.4 888.5 H1174 M1176.4 888.5 H1183 M1169.8 892.5 H1172.6 M1175 892.5 H1181"/>
<path d="M1204.2 884.5 H1217.6 M1204.2 887.5 H1217.6 M1204.2 890.5 H1217.6 M1204.2 893.5 H1214.4" stroke-width="1.1"/></g>
<path d="M1237.2 889 H1245.2 M1359 889 H1367.4 M1363.2 884.8 V893.2" stroke="#ffffff" stroke-width="1.9" stroke-linecap="butt"/>
<rect x="1253.2" y="887.1" width="98" height="3.8" rx="1.9" fill="#7f7f7f"/>
<circle cx="1305.6" cy="889" r="5.8" fill="#d4d4d4"/>
</svg>

</div>
</body>
</html>
